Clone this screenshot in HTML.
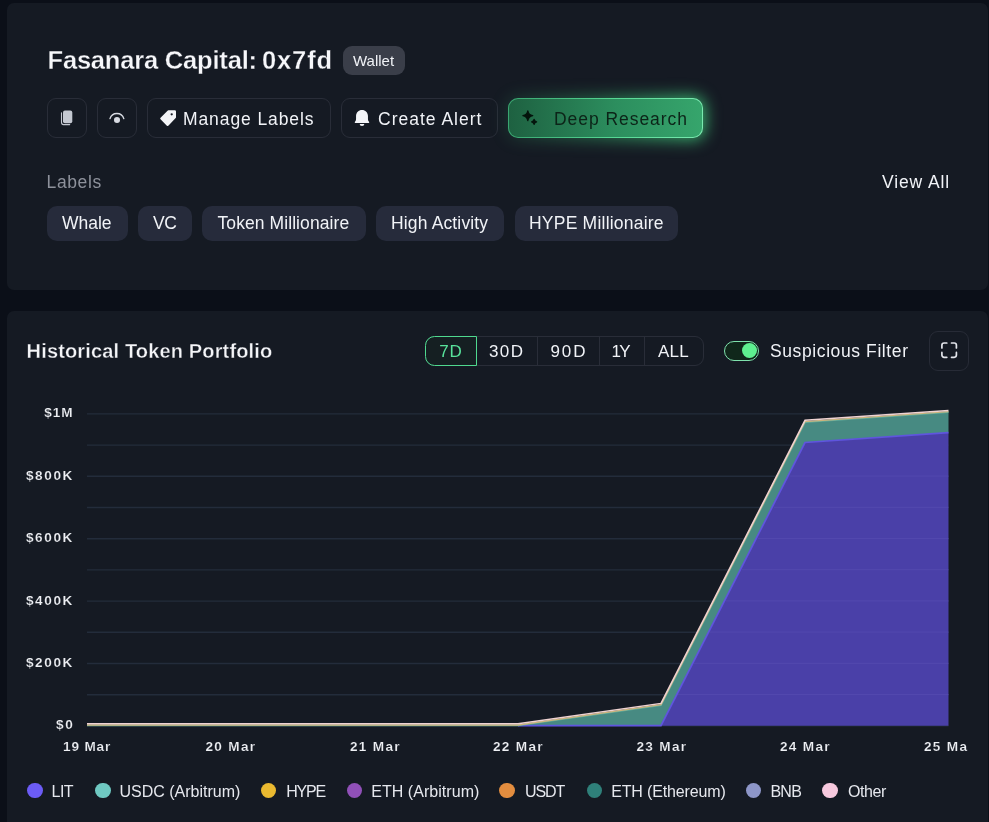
<!DOCTYPE html>
<html>
<head>
<meta charset="utf-8">
<style>
*{box-sizing:border-box;margin:0;padding:0}
html,body{width:989px;height:822px;overflow:hidden;background:#0b0f18;font-family:"Liberation Sans",sans-serif;color:#f1f3f7}
.abs{position:absolute}
.card{position:absolute;background:#151a23;border-radius:7px}
.t{position:absolute;white-space:nowrap;line-height:1}
.btn{position:absolute;border:1px solid #292d38;border-radius:9px;height:40px;top:98px}
.chip{position:absolute;top:206px;height:35px;border-radius:10px;background:#262b3b}
.chip .t,.btn .t{top:0}
.seg{position:absolute;top:336px;height:30px;border:1px solid #292d38}
.yl{position:absolute;white-space:nowrap;line-height:1;font-size:13.600px;font-weight:bold;letter-spacing:1.600px;color:#eef0f4;right:915px;text-align:right;-webkit-text-stroke:.18px #161a23}
.xl{position:absolute;white-space:nowrap;line-height:1;font-size:13.600px;font-weight:bold;-webkit-text-stroke:.18px #161a23;letter-spacing:1.300px;color:#eef0f4;top:740px}
.dot{position:absolute;width:15.5px;height:15.5px;border-radius:50%;top:782.9px}
.lg{position:absolute;white-space:nowrap;line-height:1;font-size:16px;color:#e6e8ee;top:783.500px}
</style>
</head>
<body>
<div id="root" style="position:absolute;left:0;top:0;width:989px;height:822px;will-change:transform;overflow:hidden">
<!-- top card -->
<div class="card" style="left:7px;top:3px;width:981px;height:287.300px"></div>
<div class="t" id="title" style="left:47.5px;top:48px;font-size:25.5px;font-weight:bold;letter-spacing:-.19px;-webkit-text-stroke:.3px #161a23;color:#f6f7fa">Fasanara Capital:<span style="letter-spacing:-2px"> </span><span style="letter-spacing:.9px">0x7fd</span></div>
<div class="abs" style="left:343.300px;top:45.800px;width:61.500px;height:29.700px;border-radius:9px;background:#3a3e49"></div>
<div class="t" id="wallet" style="left:353px;top:53px;font-size:15px;letter-spacing:0px;color:#f1f3f7">Wallet</div>

<!-- buttons -->
<div class="btn" style="left:47px;width:40px"></div>
<div class="btn" style="left:97px;width:40px"></div>
<div class="btn" style="left:147px;width:184px"></div>
<div class="t" id="manage" style="left:183px;top:111px;font-size:17.5px;letter-spacing:.9px">Manage Labels</div>
<div class="btn" style="left:341px;width:157px"></div>
<div class="t" id="alert" style="left:378px;top:111px;font-size:17.5px;letter-spacing:1px">Create Alert</div>
<div class="abs" style="left:506px;top:96px;width:199px;height:44px;border-radius:12px;background:linear-gradient(90deg,rgba(60,200,120,.12) 0%,rgba(64,210,125,.4) 45%,rgba(70,225,135,.8) 100%);filter:blur(8px)"></div>
<div class="abs" id="deepbtn" style="left:508px;top:98px;width:195px;height:40px;border-radius:10px;border:1px solid transparent;background:linear-gradient(90deg,#1e6141 0%,#2c8e5e 55%,#36a56c 100%) padding-box,linear-gradient(90deg,#3aa671 0%,#56d894 55%,#7aeab0 100%) border-box"></div>
<div class="t" id="deep" style="left:554px;top:111px;font-size:17.5px;letter-spacing:.95px;color:#0c2418">Deep Research</div>

<!-- labels -->
<div class="t" id="labels" style="left:46.6px;top:174px;font-size:17.5px;letter-spacing:.6px;color:#8d919b">Labels</div>
<div class="t" id="viewall" style="left:882px;top:174px;font-size:17.5px;letter-spacing:.88px;color:#f1f3f7">View All</div>
<div class="chip" style="left:47px;width:81px"></div>
<div class="t" id="c1" style="left:62px;top:215px;font-size:17.5px;letter-spacing:0px">Whale</div>
<div class="chip" style="left:138px;width:54px"></div>
<div class="t" id="c2" style="left:153px;top:215px;font-size:17.5px;letter-spacing:-0.3px">VC</div>
<div class="chip" style="left:202px;width:164px"></div>
<div class="t" id="c3" style="left:217.5px;top:215px;font-size:17.5px;letter-spacing:0.08px">Token Millionaire</div>
<div class="chip" style="left:376px;width:128px"></div>
<div class="t" id="c4" style="left:391px;top:215px;font-size:17.5px;letter-spacing:0.15px">High Activity</div>
<div class="chip" style="left:514.5px;width:163.5px"></div>
<div class="t" id="c5" style="left:529px;top:215px;font-size:17.5px;letter-spacing:0.22px">HYPE Millionaire</div>

<!-- chart card -->
<div class="card" style="left:7px;top:311px;width:981px;height:517px"></div>
<div class="t" id="htitle" style="left:26.600px;top:341px;font-size:20px;font-weight:bold;letter-spacing:.15px;-webkit-text-stroke:.35px #161a23;color:#f4f5f8">Historical Token Portfolio</div>

<!-- segmented -->
<div class="seg" style="left:425px;width:278.500px;border-radius:9px"></div>
<div class="abs" style="left:537px;top:337px;width:1px;height:28px;background:#292d38"></div>
<div class="abs" style="left:599px;top:337px;width:1px;height:28px;background:#292d38"></div>
<div class="abs" style="left:644px;top:337px;width:1px;height:28px;background:#292d38"></div>
<div class="seg" style="left:425px;width:51.500px;border-radius:9.500px 0 0 9.500px;border-color:#4fd98f;background:#151f22"></div>
<div class="t" id="s1" style="left:439.300px;top:342.5px;font-size:17px;letter-spacing:.8px;color:#58e29b">7D</div>
<div class="t" id="s2" style="left:489px;top:342.5px;font-size:17px;letter-spacing:1.4px">30D</div>
<div class="t" id="s3" style="left:550.5px;top:342.5px;font-size:17px;letter-spacing:1.9px">90D</div>
<div class="t" id="s4" style="left:611.5px;top:342.5px;font-size:17px;letter-spacing:-1.6px">1Y</div>
<div class="t" id="s5" style="left:658px;top:342.5px;font-size:17px;letter-spacing:0.25px">ALL</div>

<!-- toggle -->
<div class="abs" style="left:723.800px;top:340.800px;width:35.600px;height:20.400px;border-radius:10.200px;border:1.300px solid #7fe2ad;background:#10271b"></div>
<div class="abs" style="left:742px;top:343px;width:15.200px;height:15.200px;border-radius:50%;background:#5ef090"></div>
<div class="t" id="susp" style="left:770px;top:343px;font-size:17.5px;letter-spacing:.6px">Suspicious Filter</div>
<div class="abs" style="left:929.300px;top:331.200px;width:40px;height:40px;border:1px solid #272b36;border-radius:9px"></div>

<!-- icons + chart svg overlay -->
<svg class="abs" id="ov" style="left:0;top:0" width="989" height="822" viewBox="0 0 989 822">
<!-- gridlines -->
<g stroke="#232c3b" stroke-width="1.400" transform="translate(0 .2)">
<line x1="87" x2="948.5" y1="413.7" y2="413.7"/>
<line x1="87" x2="948.5" y1="444.9" y2="444.9"/>
<line x1="87" x2="948.5" y1="476.1" y2="476.1"/>
<line x1="87" x2="948.5" y1="507.3" y2="507.3"/>
<line x1="87" x2="948.5" y1="538.5" y2="538.5"/>
<line x1="87" x2="948.5" y1="569.7" y2="569.7"/>
<line x1="87" x2="948.5" y1="600.9" y2="600.9"/>
<line x1="87" x2="948.5" y1="632.1" y2="632.1"/>
<line x1="87" x2="948.5" y1="663.3" y2="663.3"/>
<line x1="87" x2="948.5" y1="694.5" y2="694.5"/>
<line x1="87" x2="948.5" y1="725.7" y2="725.7"/>
</g>
<!-- areas -->
<!-- ETH (Ethereum) band -->
<polygon points="518,725.7 661,704.5 805,421.5 948.5,411.5 948.5,432.7 805,442.5 661,725.7" fill="#478a82"/>
<!-- LIT area -->
<polygon points="661,725.7 805,442.5 948.5,432.7 948.5,725.7" fill="#4a40a8"/>
<!-- gridlines faint over areas -->
<g stroke="#5a50b4" stroke-width="1" opacity=".55">
<line x1="790" x2="948.5" y1="476.1" y2="476.1"/>
<line x1="774" x2="948.5" y1="507.3" y2="507.3"/>
<line x1="758" x2="948.5" y1="538.5" y2="538.5"/>
<line x1="742" x2="948.5" y1="569.7" y2="569.7"/>
<line x1="726" x2="948.5" y1="600.9" y2="600.9"/>
<line x1="710" x2="948.5" y1="632.1" y2="632.1"/>
<line x1="694" x2="948.5" y1="663.3" y2="663.3"/>
<line x1="678" x2="948.5" y1="694.5" y2="694.5"/>
</g>
<!-- LIT stroke -->
<polyline points="518,725.7 661,725.7 805,442.5 948.5,432.7" fill="none" stroke="#5f55de" stroke-width="1.700"/>
<!-- ETH top stroke / stacked thin lines -->
<polyline points="87,725.6 518,725.6 661,705.4 805,422.3 948.5,412.3" fill="none" stroke="#62ac9d" stroke-width="1.500"/>
<polyline points="87,725 518,725 661,704.6 805,421.5 948.5,411.6" fill="none" stroke="#cdb47c" stroke-width="1.300"/>
<polyline points="87,723.8 518,723.8 661,703.4 805,420.3 948.5,410.4" fill="none" stroke="#efd3d2" stroke-width="1.500"/>

<!-- copy icon -->
<path d="M61.5 112.700 V122.600 a2 2 0 0 0 2 2 H69.700" fill="none" stroke="#c4c8d1" stroke-width="1.100" stroke-linecap="round"/>
<rect x="63" y="110.600" width="9.300" height="12.600" rx="1.900" fill="#c4c8d1"/>
<!-- eye icon -->
<path d="M110 118.600 A7.200 7.200 0 0 1 123.800 118.600" fill="none" stroke="#d8dbe2" stroke-width="1.400" stroke-linecap="round"/>
<circle cx="117" cy="120" r="3.050" fill="#d8dbe2"/>
<!-- tag icon -->
<path d="M168.400 111.500 L174.800 111.500 L174.800 117.200 L167.700 124.800 L161.400 118.500 Z" fill="#f4f5f8" stroke="#f4f5f8" stroke-width="2.400" stroke-linejoin="round"/>
<circle cx="171.700" cy="114.300" r="1.150" fill="#161a23"/>
<!-- bell icon -->
<path d="M362 109.900 c-3.400 0 -5.950 2.600 -5.950 6 v3.200 c0 1.200 -.5 2.200 -1.200 3 c-.3 .4 -.1 .8 .4 .8 h13.500 c.5 0 .7 -.4 .4 -.8 c-.7 -.8 -1.200 -1.800 -1.200 -3 v-3.200 c0 -3.400 -2.550 -6 -5.950 -6 z" fill="#f4f5f8"/>
<path d="M359.700 124.100 h4.600 a2.300 2 0 0 1 -4.600 0 z" fill="#f4f5f8"/>
<!-- sparkle icon -->
<path d="M527.800 110.800 c.6 3.100 1.700 4.300 4.900 4.900 c-3.200 .6 -4.300 1.800 -4.900 4.900 c-.6 -3.100 -1.700 -4.300 -4.900 -4.900 c3.200 -.6 4.300 -1.800 4.900 -4.900 z" fill="#04140c" stroke="#04140c" stroke-width="1.300" stroke-linejoin="round"/>
<path d="M534.100 119.400 c.3 1.600 .9 2.200 2.500 2.500 c-1.600 .3 -2.200 .9 -2.500 2.500 c-.3 -1.600 -.9 -2.200 -2.500 -2.500 c1.600 -.3 2.200 -.9 2.500 -2.500 z" fill="#04140c" stroke="#04140c" stroke-width="1.300" stroke-linejoin="round"/>
<!-- fullscreen icon -->
<g fill="none" stroke="#e3e5eb" stroke-width="1.700" stroke-linecap="round" stroke-linejoin="round">
<path d="M941.900 347.900 v-2.700 a2.200 2.200 0 0 1 2.200 -2.200 h2.700"/>
<path d="M951.500 343 h2.700 a2.200 2.200 0 0 1 2.200 2.200 v2.700"/>
<path d="M956.400 352.400 v2.700 a2.200 2.200 0 0 1 -2.200 2.200 h-2.700"/>
<path d="M946.800 357.300 h-2.700 a2.200 2.200 0 0 1 -2.200 -2.200 v-2.700"/>
</g>
</svg>

<!-- axis labels -->
<div class="yl" id="y1" style="top:406px;letter-spacing:.9px;right:915.5px">$1M</div>
<div class="yl" id="y2" style="top:469px">$800K</div>
<div class="yl" id="y3" style="top:531px">$600K</div>
<div class="yl" id="y4" style="top:594px">$400K</div>
<div class="yl" id="y5" style="top:656px">$200K</div>
<div class="yl" id="y6" style="top:718px;letter-spacing:1.900px;right:914.200px">$0</div>

<div class="xl" id="x1" style="left:63px;letter-spacing:.85px">19 Mar</div>
<div class="xl" id="x2" style="left:205.5px">20 Mar</div>
<div class="xl" id="x3" style="left:350px">21 Mar</div>
<div class="xl" id="x4" style="left:493px">22 Mar</div>
<div class="xl" id="x5" style="left:636.5px">23 Mar</div>
<div class="xl" id="x6" style="left:780px">24 Mar</div>
<div class="xl" id="x7" style="left:924px;width:44px;overflow:hidden">25 Mar</div>

<!-- legend -->
<div class="dot" style="left:27px;background:#6c5cf6"></div><div class="lg" id="l1" style="left:51.5px;letter-spacing:-0.5px">LIT</div>
<div class="dot" style="left:95px;background:#6fc9c2"></div><div class="lg" id="l2" style="left:119.5px;letter-spacing:0px">USDC (Arbitrum)</div>
<div class="dot" style="left:260.5px;background:#eab930"></div><div class="lg" id="l3" style="left:286.2px;letter-spacing:-1.2px">HYPE</div>
<div class="dot" style="left:346.5px;background:#9050b8"></div><div class="lg" id="l4" style="left:371.2px;letter-spacing:0.05px">ETH (Arbitrum)</div>
<div class="dot" style="left:499px;background:#e38d3f"></div><div class="lg" id="l5" style="left:525px;letter-spacing:-1.1px">USDT</div>
<div class="dot" style="left:586.5px;background:#2f807a"></div><div class="lg" id="l6" style="left:611.2px;letter-spacing:-0.15px">ETH (Ethereum)</div>
<div class="dot" style="left:745.5px;background:#8d96c8"></div><div class="lg" id="l7" style="left:770.5px;letter-spacing:-0.8px">BNB</div>
<div class="dot" style="left:822px;background:#f7c9de"></div><div class="lg" id="l8" style="left:848px;letter-spacing:-0.4px">Other</div>
</div>
</body>
</html>
